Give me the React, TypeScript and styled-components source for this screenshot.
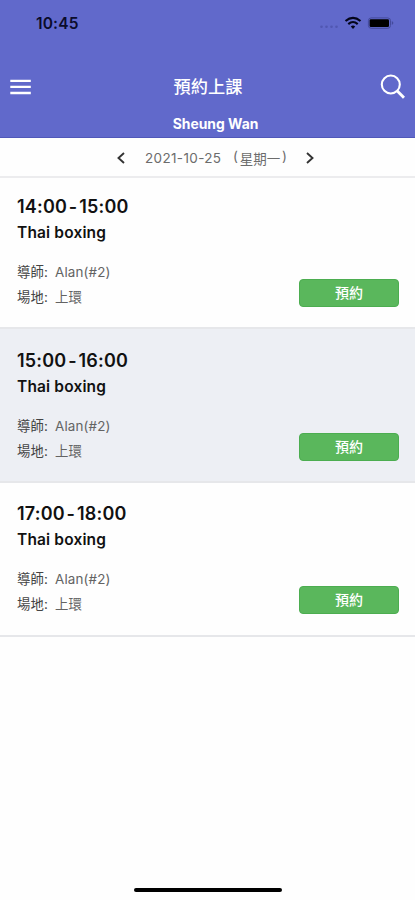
import React from "react";
import styled, { createGlobalStyle } from "styled-components";

const Global = createGlobalStyle`
  * { box-sizing: border-box; }
  body { margin: 0; background: #fff; }
`;

const Screen = styled.div`
  width: 415px;
  height: 900px;
  display: flex;
  flex-direction: column;
  overflow: hidden;
  background: #fefefe;
  color: #111;
  font-family: Inter, "Noto Sans CJK TC", sans-serif;
`;

const Header = styled.header`
  height: 138px;
  flex: none;
  background: #6169cb;
  border-bottom: 1px solid #5058b9;
  color: #fff;
`;

const StatusBar = styled.div`
  height: 46px;
  padding: 0 20px 0 36px;
  display: flex;
  align-items: center;
  justify-content: space-between;
`;

const Clock = styled.span`
  color: #0b0c2b;
  font-size: 15.5px;
  font-weight: 600;
  letter-spacing: 0.15px;
`;

const StatusIcons = styled.div`
  display: flex;
  align-items: center;
`;

const NavBar = styled.div`
  height: 82px;
  padding: 0 9px 0 10px;
  display: grid;
  grid-template-columns: 26px 1fr 26px;
  align-items: center;
`;

const NavIcon = styled.svg`
  display: block;
`;

const Title = styled.h1`
  margin: 0;
  font-size: 17.2px;
  line-height: 24px;
  font-weight: 500;
  text-align: center;
`;

const Branch = styled.div`
  margin-top: -14px;
  padding-left: 16px;
  font-size: 13.9px;
  line-height: 20px;
  font-weight: 700;
  text-align: center;
`;

const DateBar = styled.div`
  height: 40px;
  flex: none;
  display: flex;
  align-items: center;
  padding: 2px 0 0 116px;
  border-bottom: 2px solid #ececee;
  color: #6c6c6c;
  font-size: 13.5px;
`;

const DayText = styled.span`
  width: 77px;
  margin-left: 19px;
  letter-spacing: 0.35px;
  white-space: nowrap;
`;

const Weekday = styled.span`
  width: 54px;
  margin: 0 18px 0 11px;
  display: flex;
  justify-content: space-between;
  white-space: nowrap;
`;

const Session = styled.article<{ $shaded: boolean }>`
  height: 154px;
  flex: none;
  padding: 20px 16px 0 17px;
  background: ${(p) => (p.$shaded ? "#edeff4" : "#fefefe")};
  border-bottom: 2px solid #e6e7ea;
  &:first-of-type { height: 151px; padding-top: 17px; }
  &:last-of-type { padding-top: 19px; }
`;

const Time = styled.h2`
  margin: 0;
  font-size: 18px;
  line-height: 24px;
  font-weight: 600;
  word-spacing: -3px;
  letter-spacing: 0.2px;
`;

const Course = styled.div`
  margin-top: 2px;
  font-size: 15.5px;
  line-height: 24px;
  font-weight: 600;
  letter-spacing: 0.15px;
`;

const SessionFoot = styled.div`
  margin-top: 15px;
  display: flex;
  justify-content: space-between;
`;

const Detail = styled.div`
  display: flex;
  font-size: 13.4px;
  line-height: 24.5px;
  letter-spacing: 0.15px;
  color: #636363;
`;

const Label = styled.span`
  width: 38px;
  color: #444;
`;

const BookButton = styled.button`
  width: 100px;
  height: 28px;
  margin-top: 19px;
  padding: 0;
  border: 1px solid #4cad50;
  border-radius: 4px;
  background: #5ab75c;
  color: #fff;
  font: 500 14px/24px "Noto Sans CJK TC", sans-serif;
`;

const ButtonText = styled.span`
  display: block;
  height: 26px;
`;

const HomeArea = styled.footer`
  margin-top: auto;
  height: 12px;
  display: flex;
  justify-content: center;
`;

const HomeBar = styled.div`
  width: 148px;
  height: 4px;
  border-radius: 2px;
  background: #000;
`;

function Arrow({ right = false }: { right?: boolean }) {
  return (
    <NavIcon width="10" height="16" viewBox="0 0 10 16" fill="none" stroke="#333" strokeWidth="1.9">
      <path d={right ? "M2 3l5.5 5L2 13" : "M8 3L2.5 8L8 13"} />
    </NavIcon>
  );
}

const sessions = ["14:00 - 15:00", "15:00 - 16:00", "17:00 - 18:00"];

export default function App() {
  return (
    <Screen>
      <Global />
      <Header>
        <StatusBar>
          <Clock>10:45</Clock>
          <StatusIcons>
            <svg width="76" height="16" viewBox="0 0 76 16">
              <g fill="#5057b1">
                <circle cx="2.5" cy="11.8" r="1.3" />
                <circle cx="7.5" cy="11.8" r="1.3" />
                <circle cx="12.5" cy="11.8" r="1.3" />
                <circle cx="17.5" cy="11.8" r="1.3" />
              </g>
              <g fill="none" stroke="#04051a" strokeWidth="2.1">
                <path d="M26.5 6q7.5-6.4 15 0" />
                <path d="M29.3 9.1q4.7-4.2 9.4 0" />
              </g>
              <path d="M31.8 11.4q2.2-1.8 4.4 0L34 13.9z" fill="#04051a" />
              <rect x="49.4" y="2.9" width="22.1" height="10.4" rx="2.8" fill="none" stroke="#444a9c" />
              <rect x="50.6" y="4.2" width="19.4" height="7.8" rx="1.3" fill="#000" />
              <path d="M72.8 6v4q1.6-.8 1.6-2t-1.6-2z" fill="#444a9c" />
            </svg>
          </StatusIcons>
        </StatusBar>
        <NavBar>
          <NavIcon width="22" height="18" viewBox="0 0 22 18" stroke="#fff" strokeWidth="2.3">
            <path d="M.3 2.8H20.8M.3 8.9H20.8M.3 15H20.8" />
          </NavIcon>
          <Title>預約上課</Title>
          <NavIcon width="26" height="26" viewBox="0 0 26 26" fill="none" stroke="#fff">
            <circle cx="10.8" cy="10.5" r="9" strokeWidth="2.1" />
            <path d="M17.3 17L24 23.8" strokeWidth="2.9" />
          </NavIcon>
        </NavBar>
        <Branch>Sheung Wan</Branch>
      </Header>
      <DateBar>
        <Arrow />
        <DayText>2021-10-25</DayText>
        <Weekday><span>(</span><span>星期一</span><span>)</span></Weekday>
        <Arrow right />
      </DateBar>
      <main>
        {sessions.map((time, index) => (
          <Session key={time} $shaded={index === 1}>
            <Time>{time}</Time>
            <Course>Thai boxing</Course>
            <SessionFoot>
              <div>
                <Detail><Label>導師:</Label>Alan(#2)</Detail>
                <Detail><Label>場地:</Label>上環</Detail>
              </div>
              <BookButton><ButtonText>預約</ButtonText></BookButton>
            </SessionFoot>
          </Session>
        ))}
      </main>
      <HomeArea><HomeBar /></HomeArea>
    </Screen>
  );
}
